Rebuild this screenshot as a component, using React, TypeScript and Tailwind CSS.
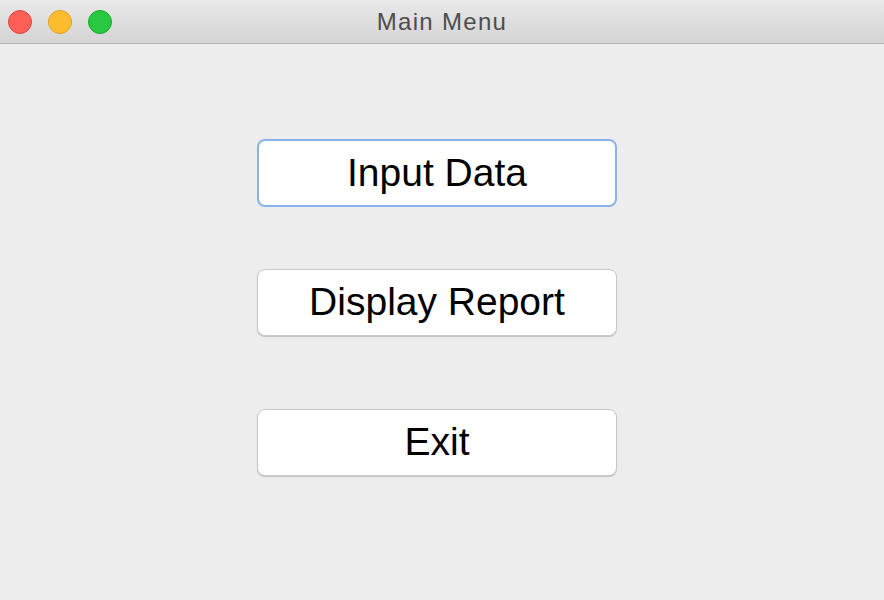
import React from 'react';

const font = { fontFamily: '"Liberation Sans", Arial, sans-serif' };

const TrafficLights: React.FC = () => (
  <div className="absolute left-[8px] top-[10px] flex gap-[16px]">
    <span className="w-[24px] h-[24px] rounded-full bg-[#fe5f57] border border-[#e0443e]" />
    <span className="w-[24px] h-[24px] rounded-full bg-[#febc2e] border border-[#dea123]" />
    <span className="w-[24px] h-[24px] rounded-full bg-[#28c840] border border-[#1aab29]" />
  </div>
);

export default function App() {
  return (
    <div className="w-[884px] h-[600px] flex flex-col bg-[#ededed] overflow-hidden" style={font}>
      {/* title bar */}
      <div className="relative h-[44px] shrink-0 flex items-center justify-center bg-gradient-to-b from-[#e9e9e9] to-[#d4d4d4] border-b border-[#b3b3b3]">
        <TrafficLights />
        <span className="text-[24px] tracking-[1.3px] text-[#4d4d4d] leading-none">Main Menu</span>
      </div>

      {/* menu */}
      <div className="flex flex-col items-center pr-[10px] text-black text-[39px]">
        <button className="mt-[95px] w-[360px] h-[68px] rounded-[8px] bg-white border-2 border-[#88b3ea] flex items-center justify-center">
          Input Data
        </button>
        <button className="mt-[62px] w-[360px] h-[67px] rounded-[8px] bg-white border border-[#c9c9c9] shadow-[0_1px_1px_rgba(0,0,0,0.18)] flex items-center justify-center">
          Display Report
        </button>
        <button className="mt-[73px] w-[360px] h-[67px] rounded-[8px] bg-white border border-[#c9c9c9] shadow-[0_1px_1px_rgba(0,0,0,0.18)] flex items-center justify-center">
          Exit
        </button>
      </div>
    </div>
  );
}
